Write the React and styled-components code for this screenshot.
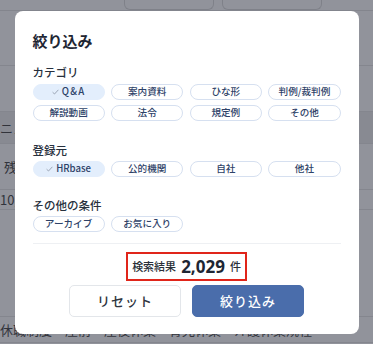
import React from "react";
import styled, { createGlobalStyle } from "styled-components";

const Global = createGlobalStyle`
  html, body { margin: 0; padding: 0; }
  body {
    width: 373px; height: 344px; overflow: hidden; background: #ffffff;
    font-family: "Noto Sans CJK JP", "Noto Sans", sans-serif;
  }
  * { box-sizing: border-box; }
`;

/* ---------- background page ---------- */
const Page = styled.div`
  width: 373px; height: 344px; display: flex; flex-direction: column;
  color: #333; font-size: 13px; overflow: hidden;
`;
const TabBar = styled.div`
  height: 11px; flex-shrink: 0; display: flex; gap: 8px; padding-left: 124px;
  border-bottom: 1px solid #e4e4e4;
`;
const Tab = styled.div`
  width: ${p => p.w}px; border: 1px solid #dcdcdc; border-top: none;
  border-radius: 0 0 6px 6px;
`;
const Row = styled.div`
  height: ${p => p.h}px; flex-shrink: 0; display: flex; align-items: center;
  padding-left: ${p => p.pl || 0}px; white-space: nowrap;
  background: ${p => (p.shade ? "#eeeeee" : "transparent")};
  border-bottom: 1px solid #e6e6e6; color: #444;
`;

/* ---------- overlay + modal ---------- */
const Overlay = styled.div`
  position: fixed; inset: 0; background: rgba(30, 35, 50, 0.49);
  display: flex; align-items: center; justify-content: center;
`;
const Modal = styled.div`
  width: 344px; height: 323px; background: #fff; border-radius: 8px;
  padding: 18px 18px 17px; display: flex; flex-direction: column;
`;
const Title = styled.h2`
  margin: 0; font-size: 15px; line-height: 24px; font-weight: 700; color: #1e2633;
`;
const Section = styled.div`
  margin-top: ${p => p.mt}px; display: flex; flex-direction: column;
`;
const Heading = styled.div`
  font-size: 11.5px; line-height: 18px; font-weight: 500; color: #27303d;
  margin-bottom: ${p => p.mb ?? 2}px;
`;
const ChipGrid = styled.div`
  display: grid; grid-template-columns: repeat(4, 1fr);
  column-gap: 6.5px; row-gap: 5px;
`;
const Chip = styled.div`
  height: 16px; border-radius: 8px; display: flex; align-items: center;
  justify-content: center; gap: 3px; font-size: 9.6px; line-height: 1;
  font-weight: 500; color: #2e4268;
  border: 1px solid ${p => (p.selected ? "#e3eefc" : "#d6e0f0")};
  background: ${p => (p.selected ? "#e3eefc" : "#fff")};
`;
const Spaced = styled.span`letter-spacing: 1.2px;`;
const Divider = styled.div`
  margin-top: 11px; height: 1px; background: #eef0f3;
`;
const ResultWrap = styled.div`
  margin-top: 8px; display: flex; justify-content: center;
`;
const ResultBox = styled.div`
  height: 29px; border: 2px solid #e0251a; padding: 0 4px 0 4px;
  display: flex; align-items: center; gap: 4px; color: #2a2f38;
`;
const Small = styled.span`font-size: 11px; font-weight: 500;`;
const Count = styled.span`
  font-family: "Noto Sans", sans-serif; font-size: 17px; font-weight: 700;
  color: #1e2633; margin: 0 1px;
`;
const Buttons = styled.div`
  margin-top: 4px; display: flex; justify-content: center; gap: 11px;
`;
const Button = styled.button`
  width: 112px; height: 32px; border-radius: 5px; font-family: inherit;
  font-size: 13px; font-weight: 500; cursor: pointer;
  border: 1px solid ${p => (p.primary ? "#4a6dab" : "#e3e6ea")};
  background: ${p => (p.primary ? "#4a6dab" : "#fff")};
  color: ${p => (p.primary ? "#fff" : "#2f3540")};
  letter-spacing: 1px;
`;

const Check = () => (
  <svg width="7" height="6" viewBox="0 0 7 6" fill="none">
    <path d="M0.6 3.2 L2.5 5 L6.4 0.8" stroke="#8a93a3" strokeWidth="0.8" />
  </svg>
);

const categories = ["Q&A", "案内資料", "ひな形", "判例/裁判例", "解説動画", "法令", "規定例", "その他"];
const sources = ["HRbase", "公的機関", "自社", "他社"];
const others = ["アーカイブ", "お気に入り"];

const ChipItem = ({ label, selected }) => (
  <Chip selected={selected}>
    {selected && <Check />}
    {label === "Q&A" ? <Spaced>Q&amp;A</Spaced> : label}
  </Chip>
);

export default function App() {
  return (
    <>
      <Global />
      <Page>
        <TabBar>
          <Tab w={90} />
          <Tab w={100} />
        </TabBar>
        <Row h={55} />
        <Row h={46} />
        <Row h={32} shade>ニュ</Row>
        <Row h={46} pl={4}>残</Row>
        <Row h={20}>10月</Row>
        <Row h={107} />
        <Row h={26}>休職制度　産前・産後休業　育児休業　介護休業規程</Row>
      </Page>
      <Overlay>
        <Modal>
          <Title>絞り込み</Title>
          <Section mt={10}>
            <Heading mb={3}>カテゴリ</Heading>
            <ChipGrid>
              {categories.map((c, i) => (
                <ChipItem key={c} label={c} selected={i === 0} />
              ))}
            </ChipGrid>
          </Section>
          <Section mt={20}>
            <Heading>登録元</Heading>
            <ChipGrid>
              {sources.map((c, i) => (
                <ChipItem key={c} label={c} selected={i === 0} />
              ))}
            </ChipGrid>
          </Section>
          <Section mt={19}>
            <Heading>その他の条件</Heading>
            <ChipGrid>
              {others.map(c => (
                <ChipItem key={c} label={c} />
              ))}
            </ChipGrid>
          </Section>
          <Divider />
          <ResultWrap>
            <ResultBox>
              <Small>検索結果</Small>
              <Count>2,029</Count>
              <Small>件</Small>
            </ResultBox>
          </ResultWrap>
          <Buttons>
            <Button>リセット</Button>
            <Button primary>絞り込み</Button>
          </Buttons>
        </Modal>
      </Overlay>
    </>
  );
}
